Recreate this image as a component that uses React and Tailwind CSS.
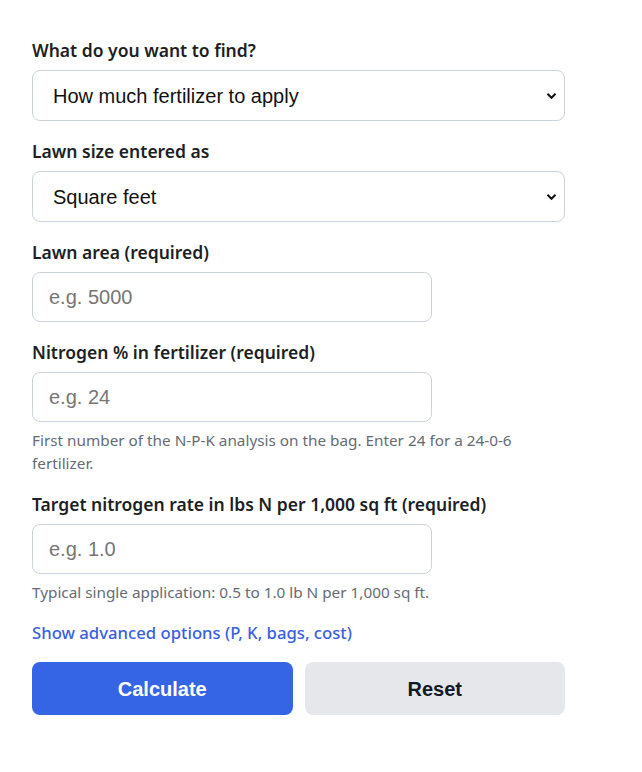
import React from "react";

const labelCls = "block mb-2 text-[17.5px] leading-[23px] font-semibold text-[#1c1f24]";
const inputCls = "block rounded-lg border border-[#cdd3dc] bg-white px-4 text-[20px] text-[#111] placeholder:text-[#767676] outline-none";
const hintCls = "mt-[7px] text-[15.3px] leading-[23px] text-[#666b73]";
const arial = { fontFamily: '"Liberation Sans", Arial, sans-serif' };

function Select({ value }) {
  return (
    <div className="relative">
      <select
        className={inputCls + " h-[51px] w-full appearance-none pl-5"}
        style={arial}
        defaultValue="a"
      >
        <option value="a">{value}</option>
      </select>
      <svg
        className="pointer-events-none absolute right-[8px] top-1/2 -translate-y-1/2"
        width="11"
        height="8"
        viewBox="0 0 11 8"
      >
        <path d="M1.5 1.8 L5.5 5.8 L9.5 1.8" fill="none" stroke="#111" strokeWidth="2" />
      </svg>
    </div>
  );
}

export default function App() {
  return (
    <div className="min-h-[772px] bg-white" style={{ fontFamily: '"Noto Sans", sans-serif' }}>
      <div className="ml-8 w-[533px] pt-[39px]">
        <div className="mb-[19px]">
          <label className={labelCls}>What do you want to find?</label>
          <Select value="How much fertilizer to apply" />
        </div>
        <div className="mb-[19px]">
          <label className={labelCls}>Lawn size entered as</label>
          <Select value="Square feet" />
        </div>
        <div className="mb-[19px]">
          <label className={labelCls}>Lawn area (required)</label>
          <input className={inputCls + " h-[50px] w-[400px]"} style={arial} placeholder="e.g. 5000" />
        </div>
        <div className="mb-[18px]">
          <label className={labelCls}>Nitrogen % in fertilizer (required)</label>
          <input className={inputCls + " h-[50px] w-[400px]"} style={arial} placeholder="e.g. 24" />
          <p className={hintCls}>
            First number of the N-P-K analysis on the bag. Enter 24 for a 24-0-6 fertilizer.
          </p>
        </div>
        <div className="mb-[17px]">
          <label className={labelCls}>Target nitrogen rate in lbs N per 1,000 sq ft (required)</label>
          <input className={inputCls + " h-[50px] w-[400px]"} style={arial} placeholder="e.g. 1.0" />
          <p className={hintCls}>Typical single application: 0.5 to 1.0 lb N per 1,000 sq ft.</p>
        </div>
        <div className="mb-[17px]">
          <button className="text-[16.7px] leading-6 font-medium text-[#3a5fe0]">
            Show advanced options (P, K, bags, cost)
          </button>
        </div>
        <div className="grid grid-cols-2 gap-3">
          <button className="h-[53px] rounded-lg bg-[#3565e5] text-[20px] font-bold text-white" style={arial}>
            Calculate
          </button>
          <button className="h-[53px] rounded-lg bg-[#e5e7eb] text-[20px] font-bold text-[#111827]" style={arial}>
            Reset
          </button>
        </div>
      </div>
    </div>
  );
}
